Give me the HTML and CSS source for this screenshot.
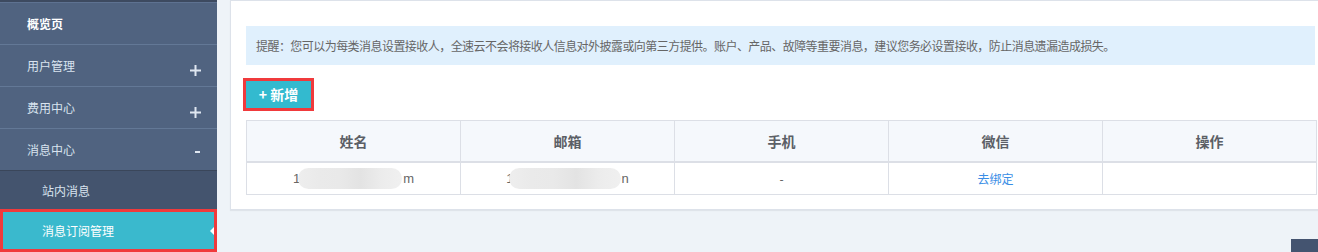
FILE: index.html
```html
<!DOCTYPE html>
<html lang="zh-CN">
<head>
<meta charset="utf-8">
<title>消息订阅管理</title>
<link rel="stylesheet" href="styles.css">
</head>
<body>
<div class="layout">
  <nav class="sidebar">
    <div class="nav-item nav-home">概览页</div>
    <div class="nav-item"><span>用户管理</span><svg class="plus" width="11" height="11" viewBox="0 0 11 11"><path d="M5.5 0v11M0 5.5h11" stroke="#dfe7f1" stroke-width="2"/></svg></div>
    <div class="nav-item"><span>费用中心</span><svg class="plus" width="11" height="11" viewBox="0 0 11 11"><path d="M5.5 0v11M0 5.5h11" stroke="#dfe7f1" stroke-width="2"/></svg></div>
    <div class="nav-item"><span>消息中心</span><span class="minus"></span></div>
    <div class="submenu">
      <div class="sub-item">站内消息</div>
      <div class="sub-item active">消息订阅管理</div>
    </div>
  </nav>
  <main class="main">
    <section class="card">
      <div class="alert">提醒：您可以为每类消息设置接收人，全速云不会将接收人信息对外披露或向第三方提供。账户、产品、故障等重要消息，建议您务必设置接收，防止消息遗漏造成损失。</div>
      <div class="toolbar"><button class="btn-add">+ 新增</button></div>
      <table class="grid">
        <thead>
          <tr><th>姓名</th><th>邮箱</th><th>手机</th><th>微信</th><th>操作</th></tr>
        </thead>
        <tbody>
          <tr>
            <td><span class="masked"><span class="ch">1</span><span class="blur blur-name"></span><span class="ch">m</span></span></td>
            <td><span class="masked"><span class="ch">1</span><span class="blur blur-mail"></span><span class="ch">n</span></span></td>
            <td>-</td>
            <td><a class="link">去绑定</a></td>
            <td></td>
          </tr>
        </tbody>
      </table>
    </section>
  </main>
</div>
<div class="to-top"></div>
</body>
</html>
```

FILE: styles.css
```css
html, body {
  margin: 0;
  padding: 0;
}
body {
  width: 1318px;
  height: 252px;
  overflow: hidden;
  background: #eef3f8;
  font-family: "Liberation Sans", "Noto Sans CJK SC", sans-serif;
  font-size: 12px;
  color: #555;
  position: relative;
}
.layout {
  display: flex;
  height: 252px;
}
.sidebar {
  width: 217px;
  flex: none;
  background: #506380;
  border-top: 2px solid #3d4a60;
  box-sizing: border-box;
}
.nav-item {
  height: 41px;
  border-top: 1px solid #637896;
  display: flex;
  align-items: center;
  justify-content: space-between;
  padding: 0 16px 0 27px;
  color: #d9e3ef;
  font-size: 12px;
  font-family: "Noto Sans CJK SC", sans-serif;
}
.nav-item:first-child {
  border-top: 1px solid #5e7291;
}
.nav-home {
  color: #fff;
  font-weight: bold;
}
.plus {
  margin-top: 9px;
}
.minus {
  width: 5px;
  height: 2px;
  background: #dfe7f1;
  margin-right: 15px;
  margin-top: 4px;
}
.nav-item .minus {
  margin-right: 0;
  position: relative;
  left: -1px;
}
.submenu {
  background: #44546e;
  border-top: 1px solid #3a465a;
}
.sub-item {
  height: 38px;
  display: flex;
  align-items: center;
  padding-left: 42px;
  color: #d9e3ef;
  font-family: "Noto Sans CJK SC", sans-serif;
}
.sub-item.active {
  height: 43px;
  background: #3ab9cd;
  color: #fff;
  box-shadow: inset 0 0 0 3px #f03a3c;
  position: relative;
}
.sub-item.active::after {
  content: "";
  position: absolute;
  right: 3px;
  top: 18px;
  border-style: solid;
  border-width: 4px 4px 4px 0;
  border-color: transparent #fff transparent transparent;
}
.main {
  flex: none;
  padding-left: 13px;
}
.card {
  width: 1070px;
  background: #fff;
  border: 1px solid #dde2ea;
  border-right: none;
  padding: 25px 16px 14px 15px;
  box-shadow: 0 1px 1px #dfe4ea;
}
.alert {
  background: #e0f0fd;
  height: 39px;
  width: 1069px;
  box-sizing: border-box;
  padding-left: 10px;
  display: flex;
  align-items: center;
  color: #666;
  font-family: "Noto Sans CJK SC", sans-serif;
  font-size: 12px;
  letter-spacing: -0.55px;
}
.toolbar {
  padding: 16px 0 12px;
  display: flex;
}
.btn-add {
  width: 65px;
  height: 27px;
  border: none;
  background: #33bacf;
  color: #fff;
  font-family: "Noto Sans CJK SC", sans-serif;
  font-weight: bold;
  font-size: 14px;
  padding: 0;
  box-shadow: 0 0 0 3px #f03a3c;
  line-height: 27px;
}
.grid {
  width: 1071px;
  border-collapse: collapse;
  table-layout: fixed;
  font-family: "Noto Sans CJK SC", sans-serif;
}
.grid th, .grid td {
  border: 1px solid #dcdfe6;
  text-align: center;
  padding: 0;
}
.grid th {
  background: #f5f8fc;
  height: 40px;
  font-size: 14px;
  font-weight: bold;
  color: #5b5f66;
  border-bottom: 2px solid #dcdfe6;
}
.grid td {
  height: 31px;
  font-size: 12px;
  color: #555;
}
.masked {
  display: inline-flex;
  align-items: center;
  font-family: "Liberation Sans", sans-serif;
  font-size: 13px;
  color: #666;
}
.masked .ch {
  line-height: 1;
}
.blur {
  display: inline-block;
  height: 21px;
  border-radius: 11px;
  background: linear-gradient(90deg, #eeeeee 0, #eaeaea 20%, #e9e9e9 40%, #e3e3e3 60%, #ececec 80%, #f0f0f0 100%);
}
.blur-name {
  width: 104px;
  margin: 0 1px 0 -2px;
}
.blur-mail {
  width: 112px;
  margin: 0 1px 0 -5px;
}
.link {
  color: #3a8ee6;
}
.to-top {
  position: absolute;
  right: 0;
  bottom: 0;
  width: 27px;
  height: 13px;
  background: #445470;
}
```
